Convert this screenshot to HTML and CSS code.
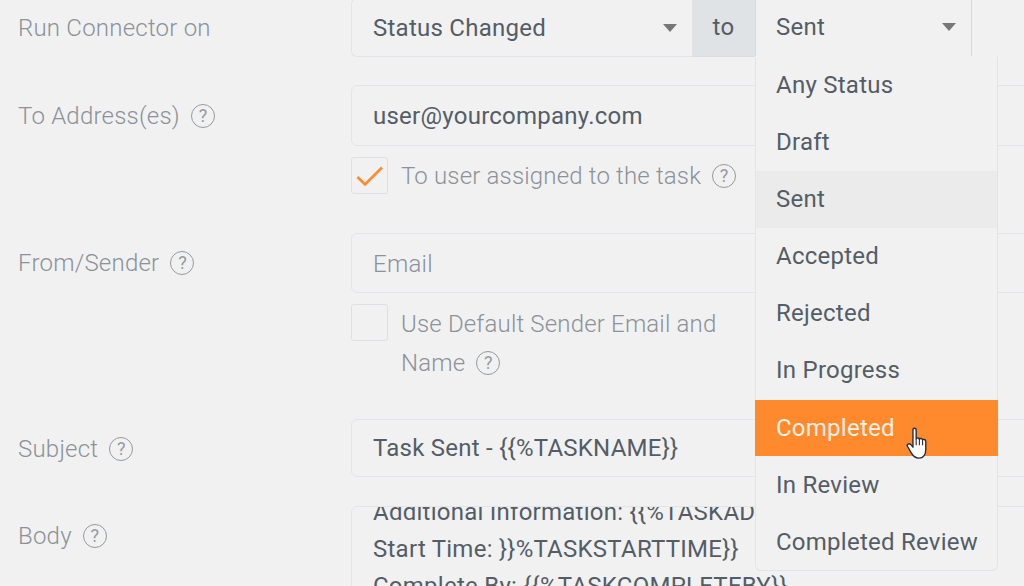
FILE: index.html
```html
<!DOCTYPE html>
<html lang="en">
<head>
<meta charset="utf-8">
<title>Run Connector</title>
<link rel="stylesheet" href="styles.css">
</head>
<body>
<main class="form">
  <div class="row row-trigger">
    <div class="label">Run Connector on</div>
    <div class="control">
      <div class="group">
        <div class="select select-first"><span>Status Changed</span><i class="caret"></i></div>
        <div class="addon">to</div>
        <div class="select select-open"><span>Sent</span><i class="caret"></i></div>
      </div>
    </div>
  </div>
  <div class="row row-to">
    <div class="label">To Address(es) <span class="help">?</span></div>
    <div class="control">
      <div class="input">user@yourcompany.com</div>
      <div class="check check-one">
        <span class="box"><svg width="28" height="22" viewBox="0 0 28 22"><path d="M1.5 12 L9 19.5 L26 2.5" fill="none" stroke="#ff8a2d" stroke-width="2.6"/></svg></span>
        <span class="check-text">To user assigned to the task <span class="help">?</span></span>
      </div>
    </div>
  </div>
  <div class="row row-from">
    <div class="label">From/Sender <span class="help">?</span></div>
    <div class="control">
      <div class="input placeholder">Email</div>
      <div class="check check-two">
        <span class="box"></span>
        <span class="check-text">Use Default Sender Email and<br>Name <span class="help">?</span></span>
      </div>
    </div>
  </div>
  <div class="row row-subject">
    <div class="label">Subject <span class="help">?</span></div>
    <div class="control">
      <div class="input">Task Sent - {{%TASKNAME}}</div>
    </div>
  </div>
  <div class="row row-body">
    <div class="label">Body <span class="help">?</span></div>
    <div class="control">
      <div class="textarea">
        <div class="textarea-inner">Additional Information: {{%TASKADDITIONALINFO}}<br>Start Time: }}%TASKSTARTTIME}}<br>Complete By: {{%TASKCOMPLETEBY}}</div>
      </div>
    </div>
  </div>
</main>
<ul class="menu">
  <li>Any Status</li>
  <li>Draft</li>
  <li class="current">Sent</li>
  <li>Accepted</li>
  <li>Rejected</li>
  <li>In Progress</li>
  <li class="hover">Completed</li>
  <li>In Review</li>
  <li>Completed Review</li>
</ul>
<svg class="cursor" width="24" height="33" viewBox="0 0 26 36">
  <path d="M7.5 3 C7.5 .8 11 .8 11 3 L11 13 C11 11.5 14.5 11.5 14.5 13.5 C14.8 12 18 12.2 18 14.3 C18.3 13 21.5 13.3 21.5 15.5 L21.5 24 C21.5 30 19 34 14 34 C9.5 34 7.5 31.5 5.5 28 L1.5 21 C.5 19 3 17.3 5 19 L7.5 22 Z" fill="#fff" stroke="#2b2b33" stroke-width="1.5" stroke-linejoin="round"/>
  <path d="M11 13 V20 M14.5 13.5 V20 M18 14.5 V20" fill="none" stroke="#2b2b33" stroke-width="1.2"/>
</svg>
</body>
</html>
```
FILE: styles.css
```css
* { box-sizing: border-box; }
html, body { margin: 0; height: 586px; overflow: hidden; }
body {
  position: relative;
  background: #f1f1f1;
  font-family: Roboto, "Liberation Sans", sans-serif;
  font-size: 24px;
  letter-spacing: .25px;
  color: #545d66;
}
.form { margin-top: -2px; padding-left: 18px; }
.row { display: grid; grid-template-columns: 333px 1fr; }
.row-trigger { height: 87px; }
.row-to { height: 148px; }
.row-from { height: 186px; }
.row-subject { height: 87px; }
.label { color: #8b9299; font-weight: 300; line-height: 34px; padding-top: 13px; letter-spacing: .22px; }
.row-to .label { padding-top: 14px; }
.control { min-width: 0; width: 800px; }
.group { display: flex; height: 59px; }
.select {
  display: flex;
  align-items: center;
  justify-content: space-between;
  padding: 0 15px 0 21px;
}
.select-first {
  width: 341px;
  border: 1px solid #e1e5e9;
  border-right: 0;
  border-radius: 6px;
  border-top-right-radius: 0;
  border-bottom-right-radius: 0;
}
.select-open {
  width: 217px;
  height: 58px;
  padding-left: 20px;
  border-left: 1px solid #fcd2a8;
  border-right: 1px solid #fcd2a8;
}
.caret {
  width: 0;
  height: 0;
  border-left: 7.5px solid transparent;
  border-right: 7.5px solid transparent;
  border-top: 8px solid #777;
}
.addon {
  width: 63px;
  background: #e0e3e6;
  border-bottom: 1px solid #d9dde1;
  display: flex;
  align-items: center;
  justify-content: center;
}
.input {
  height: 61px;
  border: 1px solid #e1e5e9;
  border-radius: 6px;
  padding-left: 21px;
  line-height: 61px;
}
.row-from .input { height: 60px; line-height: 60px; }
.row-subject .input { height: 58px; line-height: 56px; }
.placeholder { color: #8b9299; font-weight: 300; }
.check { display: flex; gap: 13px; color: #8b9299; font-weight: 300; letter-spacing: .17px; }
.check-one { margin-top: 11px; }
.check-two { margin-top: 11px; }
.box {
  width: 37px;
  height: 37px;
  flex: none;
  border: 1px solid #dcdfe3;
  border-radius: 3px;
  display: flex;
  align-items: center;
  justify-content: center;
}
.check-text { line-height: 39px; }
.check-two .check-text { padding-top: 1px; }
.help {
  display: inline-flex;
  width: 24px;
  height: 24px;
  margin-left: 5px;
  border: 1.6px solid #949a9f;
  border-radius: 50%;
  align-items: center;
  justify-content: center;
  font-size: 18px;
  font-weight: 400;
  letter-spacing: 0;
  line-height: 1;
  color: #949a9f;
  vertical-align: 2px;
}
.textarea {
  height: 120px;
  border: 1px solid #e1e5e9;
  border-radius: 6px;
  padding-left: 21px;
  overflow: hidden;
}
.textarea-inner { margin-top: -13px; line-height: 37px; white-space: nowrap; }
.menu {
  position: absolute;
  left: 755px;
  top: 57px;
  width: 243px;
  height: 514px;
  margin: 0;
  padding: 0;
  list-style: none;
  background: #f1f1f1;
  border: 1px solid #e1e4e8;
  border-top: 0;
  border-radius: 0 0 6px 6px;
}
.menu li { height: 57.1px; line-height: 57px; padding-left: 20px; }
.menu .current { background: #ebebeb; }
.menu .hover { background: #ff8a2d; color: #fdf0e4; margin: 0 -1px; padding-left: 21px; height: 56.6px; margin-bottom: .5px; }
.cursor { position: absolute; left: 906px; top: 427px; }
```
